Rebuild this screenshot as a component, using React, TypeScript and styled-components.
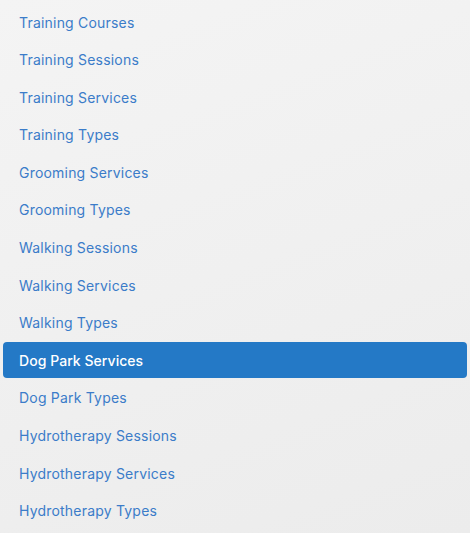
import React from 'react';
import styled, { createGlobalStyle } from 'styled-components';

const GlobalStyle = createGlobalStyle`
  html, body {
    margin: 0;
    padding: 0;
    height: 100%;
  }
  body {
    font-family: Inter, "Noto Sans", sans-serif;
    background: linear-gradient(160deg, #f4f4f4 0%, #ececec 100%);
    min-height: 533px;
  }
`;

const Nav = styled.nav`
  display: flex;
  flex-direction: column;
  gap: 1.6px;
  padding: 4px 3px;
`;

const NavItem = styled.a<{ $active?: boolean }>`
  display: flex;
  align-items: center;
  height: 36px;
  padding: 0 16px;
  border-radius: 4px;
  font-size: 14px;
  letter-spacing: ${({ $active }) => ($active ? '0.05px' : '0.2px')};
  font-weight: ${({ $active }) => ($active ? 500 : 400)};
  color: ${({ $active }) => ($active ? '#ffffff' : '#3b7cc9')};
  background: ${({ $active }) => ($active ? '#2479c6' : 'transparent')};
  text-decoration: none;
  cursor: pointer;
`;

const items = [
  'Training Courses',
  'Training Sessions',
  'Training Services',
  'Training Types',
  'Grooming Services',
  'Grooming Types',
  'Walking Sessions',
  'Walking Services',
  'Walking Types',
  'Dog Park Services',
  'Dog Park Types',
  'Hydrotherapy Sessions',
  'Hydrotherapy Services',
  'Hydrotherapy Types',
];

export default function App() {
  return (
    <>
      <GlobalStyle />
      <Nav>
        {items.map((label) => (
          <NavItem key={label} $active={label === 'Dog Park Services'}>
            {label}
          </NavItem>
        ))}
      </Nav>
    </>
  );
}
